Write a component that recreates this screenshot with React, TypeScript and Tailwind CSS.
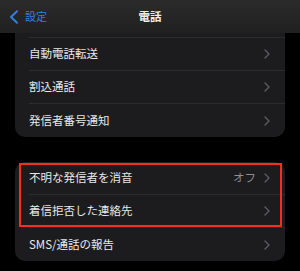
import React from "react";

const font = { fontFamily: '"Noto Sans CJK JP", "Noto Sans", sans-serif' };

function Chevron() {
  return (
    <svg width="6" height="10" viewBox="0 0 6 10" className="shrink-0">
      <path d="M1 1 L5 5 L1 9" fill="none" stroke="#5b5b60" strokeWidth="1.4" strokeLinecap="round" strokeLinejoin="round" />
    </svg>
  );
}

function Row({ label, value, last }: { label: string; value?: string; last?: boolean }) {
  return (
    <div className="flex h-[33px] pl-[14px]">
      <div className={`flex flex-1 items-center pr-[15px] ${last ? "" : "border-b border-[#2c2c2e]"}`}>
        <span className="flex-1 text-[11.5px] text-[#e8e8ea] leading-none">{label}</span>
        {value && <span className="mr-[8px] text-[11.5px] text-[#8d8d92] leading-none">{value}</span>}
        <Chevron />
      </div>
    </div>
  );
}

export default function App() {
  return (
    <div className="w-[300px] h-[271px] bg-black overflow-hidden" style={font}>
      <div className="relative flex h-[33px] items-center bg-gradient-to-b from-[#2b2b2b] to-[#202020]">
        <div className="flex items-center pl-[9px]">
          <svg width="10" height="14" viewBox="0 0 10 14">
            <path d="M8 1.2 L2 7 L8 12.8" fill="none" stroke="#2f80e0" strokeWidth="2" strokeLinecap="round" strokeLinejoin="round" />
          </svg>
          <span className="ml-[6px] text-[11px] text-[#2f80e0] leading-none">設定</span>
        </div>
        <span className="absolute left-1/2 -translate-x-1/2 text-[11.5px] font-semibold text-[#ededed] leading-none">電話</span>
      </div>
      <div className="mx-[15px] rounded-b-[10px] bg-[#1c1c1e]">
        <div className="pl-[14px]">
          <div className="h-[5px] border-b border-[#2c2c2e]" />
        </div>
        <Row label="自動電話転送" />
        <Row label="割込通話" />
        <Row label="発信者番号通知" last />
      </div>
      <div className="mx-[15px] mt-[25px] rounded-[10px] bg-[#1c1c1e]">
        <div className="relative">
          <Row label="不明な発信者を消音" value="オフ" />
          <Row label="着信拒否した連絡先" />
          <div className="pointer-events-none absolute left-[4px] right-[3px] top-[1px] bottom-[1px] border-2 border-[#f4301c]" />
        </div>
        <Row label="SMS/通話の報告" last />
      </div>
    </div>
  );
}
